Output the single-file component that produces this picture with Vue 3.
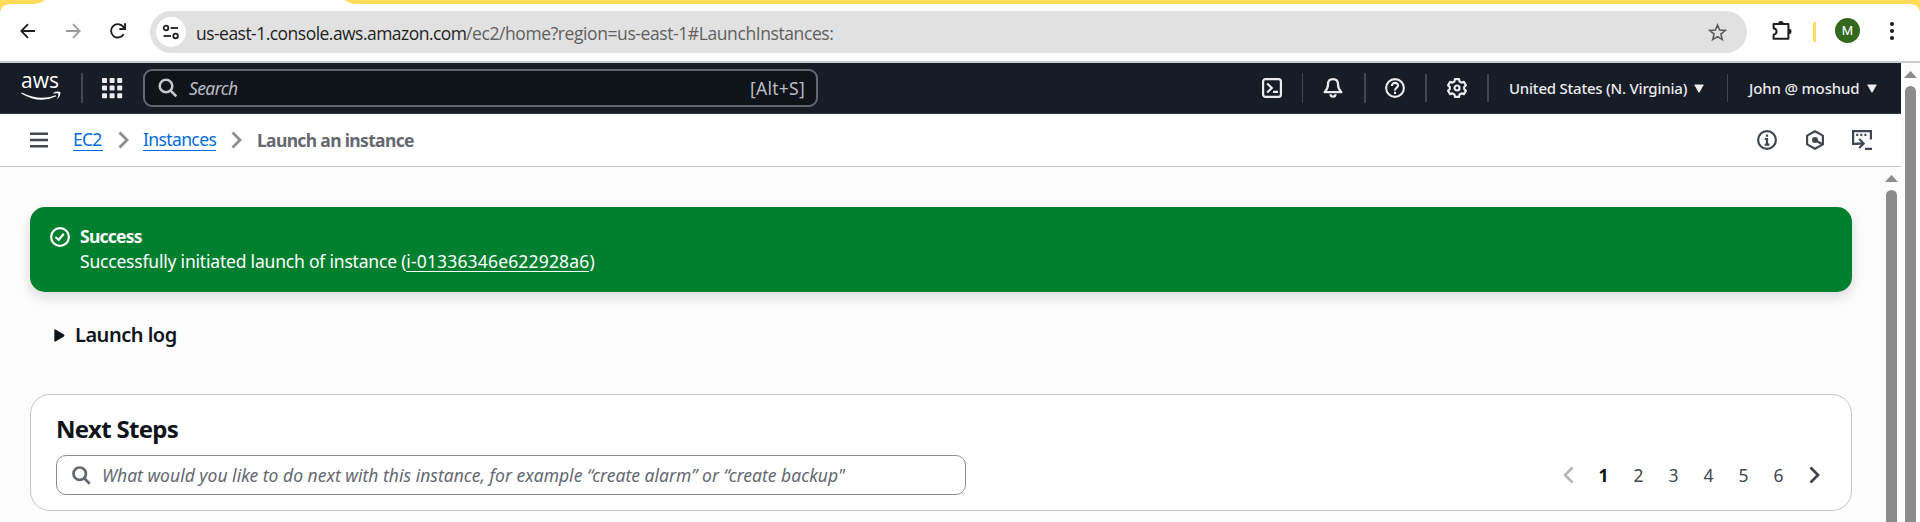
<script setup>
const pages = [1, 2, 3, 4, 5, 6]
const dots = [0, 1, 2, 3, 4, 5, 6, 7, 8].map((i) => ({ x: (i % 3) * 7.6, y: Math.floor(i / 3) * 7.6 }))
</script>

<template>
  <div class="window">
    <div class="strip">
      <svg width="1920" height="14" viewBox="0 0 1920 14">
        <path d="M0 0H45Q40 4 32 4H12Q0 4 0 14Z" fill="#ffdc5c" />
        <path d="M345 0H1920V14Q1920 4 1909 4H356Q350 4 345 0Z" fill="#ffdc5c" />
      </svg>
    </div>

    <div class="toolbar">
      <svg class="back" width="16" height="16" viewBox="0 0 16 16" fill="none" stroke="#1f1f1f" stroke-width="1.8">
        <path d="M15 8H2M8 1.2L1.3 8L8 14.8" />
      </svg>
      <svg class="fwd" width="16" height="16" viewBox="0 0 16 16" fill="none" stroke="#9c9c9c" stroke-width="1.8">
        <path d="M1 8H14M8 1.2L14.7 8L8 14.8" />
      </svg>
      <svg class="reload" width="18" height="18" viewBox="0 0 18 18" fill="none" stroke="#1f1f1f" stroke-width="1.9">
        <path d="M14.6 12.2A6.7 6.7 0 1 1 14.1 4.7L16 6.6" />
        <path d="M16 1.2V7H10.3" />
      </svg>
      <div class="address">
        <span class="site">
          <svg width="18" height="16" viewBox="0 0 18 16" fill="none" stroke="#1f1f1f" stroke-width="1.8">
            <circle cx="4" cy="4" r="2.3" /><path d="M8.6 4H16" />
            <circle cx="13.6" cy="12" r="2.3" /><path d="M1.6 12H9" />
          </svg>
        </span>
        <span class="host">us-east-1.console.aws.amazon.com</span>
        <span class="path">/ec2/home?region=us-east-1#LaunchInstances:</span>
        <svg class="star" width="19" height="19" viewBox="0 0 19 19" fill="none" stroke="#5b5b5b" stroke-width="1.6">
          <path d="M9.5 2L11.6 7.1L17.2 7.5L12.9 11.1L14.3 16.6L9.5 13.6L4.7 16.6L6.1 11.1L1.8 7.5L7.4 7.1Z" />
        </svg>
      </div>
      <svg class="puzzle" width="22" height="22" viewBox="0 0 22 22">
        <path d="M3.2 4H17.4V18.8H2.6V14.8Q5.6 14 5.6 11.6Q5.6 9 2.6 8.3V4Z" fill="none" stroke="#1f1f1f" stroke-width="2" stroke-linejoin="round" />
        <path d="M7.2 3.6A2.7 2.7 0 0 1 12.6 3.6ZM17.8 8.7A2.7 2.7 0 0 1 17.8 14.1Z" fill="#1f1f1f" />
      </svg>
      <span class="accent"></span>
      <span class="avatar">M</span>
      <svg class="kebab" width="6" height="20" viewBox="0 0 6 20" fill="#1f1f1f">
        <circle cx="3" cy="3" r="2.1" /><circle cx="3" cy="10" r="2.1" /><circle cx="3" cy="17" r="2.1" />
      </svg>
    </div>

    <div class="page">
      <div class="console">
        <header class="nav">
          <div class="aws">
            <span>aws</span>
            <svg width="40" height="11" viewBox="0 0 40 11" fill="#fff">
              <path d="M.6 1.5Q19 10.500 34.500 4.200L35.300 5.200Q18.500 13.500 .3 2.400Z" />
              <path d="M32 2Q36 -.1 39.200 1Q40 4.600 36.700 7.700L36.200 7.400Q38 4 37.200 2.500Q35.500 2 32.200 2.600Z" />
            </svg>
          </div>
          <i class="sep s1"></i>
          <svg class="grid" width="21" height="21" viewBox="0 0 21 21" fill="#ebebf0">
            <rect v-for="d in dots" :key="d.x + '-' + d.y" :x="d.x" :y="d.y" width="5" height="5" rx=".8" />
          </svg>
          <div class="navsearch">
            <svg width="20" height="20" viewBox="0 0 20 20" fill="none" stroke="#c6c6cd" stroke-width="2.5">
              <circle cx="8" cy="8" r="6.300" /><path d="M12.500 12.500L18.300 18.300" />
            </svg>
            <span class="term">Search</span>
            <span class="key">[Alt+S]</span>
          </div>
          <svg class="nicon shell" width="20" height="20" viewBox="0 0 20 20" fill="none" stroke="#ebebf0" stroke-width="2.200">
            <rect x="1.100" y="1.100" width="17.800" height="17.800" rx="2.400" />
            <path d="M5.200 5.500L9.800 10L5.200 14.500M11 13.800H16" />
          </svg>
          <i class="sep s2"></i>
          <svg class="nicon bell" width="20" height="20" viewBox="0 0 20 20" fill="none" stroke="#ebebf0" stroke-width="2.200" stroke-linejoin="round">
            <path d="M10 1.200C6.800 1.200 5 3.500 5 6.500C5 10 3.700 12 1.600 14.200H18.400C16.300 12 15 10 15 6.500C15 3.500 13.200 1.200 10 1.200Z" />
            <path d="M7.500 16.200A2.500 2.500 0 0 0 12.500 16.200" />
          </svg>
          <i class="sep s3"></i>
          <svg class="nicon help" width="20" height="20" viewBox="0 0 20 20" fill="none" stroke="#ebebf0" stroke-width="2.100">
            <circle cx="10" cy="10" r="8.900" />
            <path d="M6.900 8C6.900 5.900 8.200 4.900 10 4.900S13.100 6 13.100 7.600C13.100 9.800 10 9.600 10 12.400M10 13.800V16" />
          </svg>
          <i class="sep s4"></i>
          <svg class="nicon gear" width="20" height="20" viewBox="0 0 20 20" fill="none" stroke="#ebebf0" stroke-width="2.200" stroke-linejoin="round">
            <path d="M8 1.100H12L12.600 3.500L14.500 4.600L16.900 3.900L18.900 7.300L17.200 9V11L18.900 12.700L16.900 16.100L14.500 15.400L12.600 16.500L12 18.900H8L7.400 16.500L5.500 15.400L3.100 16.100L1.100 12.700L2.800 11V9L1.100 7.300L3.100 3.900L5.500 4.600L7.400 3.500Z" />
            <circle cx="10" cy="10" r="2.500" />
          </svg>
          <i class="sep s5"></i>
          <span class="region">United States (N. Virginia)</span>
          <svg class="caret" width="10" height="9" viewBox="0 0 10 9"><path d="M1 .5H9Q9.900.500 9.500 1.300L5.700 8Q5 9 4.300 8L.5 1.300Q.1.500 1 .5Z" fill="#ebebf0" /></svg>
          <i class="sep s6"></i>
          <span class="user">John @ moshud</span>
          <svg class="caret" width="10" height="9" viewBox="0 0 10 9"><path d="M1 .5H9Q9.900.500 9.500 1.300L5.700 8Q5 9 4.300 8L.5 1.300Q.1.500 1 .5Z" fill="#ebebf0" /></svg>
        </header>

        <div class="crumbs">
          <svg class="burger" width="18" height="16" viewBox="0 0 18 16" fill="#424650">
            <path d="M0 .5H18V2.900H0ZM0 6.800H18V9.200H0ZM0 13.100H18V15.500H0Z" />
          </svg>
          <a class="ec2">EC2</a>
          <svg class="chev c1" width="11" height="18" viewBox="0 0 11 18" fill="none" stroke="#8c8c94" stroke-width="2.800"><path d="M1.500 1.500L9 9L1.500 16.500" /></svg>
          <a class="inst">Instances</a>
          <svg class="chev c2" width="11" height="18" viewBox="0 0 11 18" fill="none" stroke="#8c8c94" stroke-width="2.800"><path d="M1.500 1.500L9 9L1.500 16.500" /></svg>
          <b class="current">Launch an instance</b>
          <div class="tools">
            <svg width="20" height="20" viewBox="0 0 20 20" fill="none" stroke="#424650" stroke-width="2.200">
              <circle cx="10" cy="10" r="8.900" /><path d="M10 4.600V6.800M7.800 9H10V14.500M7.700 14.600H12.400" />
            </svg>
            <svg width="20" height="20" viewBox="0 0 20 20" fill="none" stroke="#424650" stroke-width="2.200">
              <path d="M10 1.300L17.900 5.600V14.400L10 18.700L2.100 14.400V5.600Z" stroke-linejoin="round" />
              <circle cx="10" cy="10" r="3" fill="#424650" stroke="none" /><path d="M10 10L16.800 14" />
            </svg>
            <svg width="20" height="20" viewBox="0 0 20 20" fill="none" stroke="#424650" stroke-width="2.200">
              <path d="M6 13.900H1.100V1.100H18.900V9.500" />
              <path d="M4.200 4.900H6.200M8.300 4.900H10.300M12.400 4.900H14.400" />
              <path d="M4.500 13.700H11M7.200 9L11.600 13.500L7.200 18M13 18.900H20" />
            </svg>
          </div>
        </div>

        <main class="content">
          <section class="flash">
            <svg width="20" height="20" viewBox="0 0 20 20" fill="none" stroke="#fff" stroke-width="2.200">
              <circle cx="10" cy="10" r="8.900" /><path d="M5.500 10L8.700 13L13.800 6.700" />
            </svg>
            <div>
              <b class="ok">Success</b>
              <p><span class="msg">Successfully initiated launch of instance (</span><a>i-01336346e622928a6</a>)</p>
            </div>
          </section>

          <section class="log">
            <svg width="11" height="13" viewBox="0 0 11 13"><path d="M.3 1.200Q.3 0 1.500.400L10 5.500Q11 6.500 10 7.500L1.500 12.600Q.3 13 .3 11.800Z" fill="#0f141a" /></svg>
            <b>Launch log</b>
          </section>

          <section class="card">
            <h2>Next Steps</h2>
            <div class="row">
              <div class="ask">
                <svg width="19" height="19" viewBox="0 0 19 19" fill="none" stroke="#656871" stroke-width="2.700">
                  <circle cx="7.700" cy="7.700" r="6.200" /><path d="M12 12L17.700 17.700" />
                </svg>
                <span>What would you like to do next with this instance, for example “create alarm” or “create backup"</span>
              </div>
              <nav class="pager">
                <svg width="11" height="18" viewBox="0 0 11 18" fill="none" stroke="#b4b4bb" stroke-width="2.500"><path d="M9.500 1.500L2 9L9.500 16.500" /></svg>
                <span v-for="p in pages" :key="p" :class="{ on: p === 1 }">{{ p }}</span>
                <svg width="11" height="18" viewBox="0 0 11 18" fill="none" stroke="#424650" stroke-width="2.800"><path d="M1.500 1.500L9 9L1.500 16.500" /></svg>
              </nav>
            </div>
          </section>

          <div class="scroll inner">
            <svg width="13" height="7" viewBox="0 0 13 7"><path d="M6.500 0L13 7H0Z" fill="#8b8b8b" /></svg>
            <i></i>
          </div>
        </main>
      </div>

      <div class="scroll outer">
        <svg width="13" height="7" viewBox="0 0 13 7"><path d="M6.500 0L13 7H0Z" fill="#8b8b8b" /></svg>
        <i></i>
      </div>
    </div>
  </div>
</template>

<style>
html, body { margin: 0; overflow: hidden; }
</style>

<style scoped>
* { box-sizing: border-box; }
.window {
  width: 1920px; height: 522px; overflow: hidden; display: flex; flex-direction: column;
  background: #fff; color: #0f141a; font-family: "Noto Sans", "Open Sans", sans-serif; font-size: 17.5px;
}
svg { display: block; flex: none; }
span, b, a, h2, p { white-space: nowrap; }
.strip { height: 4px; flex: none; }

.toolbar { height: 59px; flex: none; display: flex; align-items: center; padding: 0 0 2px; border-bottom: 2px solid #c9cccd; }
.back { margin: 0 0 2px 20px; }
.fwd { margin: 0 0 2px 29px; }
.reload { margin: 0 0 2px 28px; }
.address {
  width: 1597px; height: 42px; margin: 0 0 0 23px; border-radius: 21px; background: #e1e1e1;
  display: flex; align-items: center; padding-left: 6px; font-family: "Open Sans", sans-serif;
}
.site { width: 30px; height: 30px; border-radius: 50%; background: #fff; display: flex; align-items: center; justify-content: center; margin-right: 10px; }
.host, .path { line-height: 24px; height: 24px; flex: none; font-size: 17.5px; margin-top: 2px; }
.host { width: 270px; color: #1f1f1f; letter-spacing: -.53px; }
.path { width: 1242px; color: #606060; letter-spacing: -.41px; }
.star { margin-top: 1px; }
.puzzle { margin: 0 0 2px 24px; }
.accent { width: 3px; height: 20px; border-radius: 1px; background: #ffdc5c; margin: 0 0 0 20px; }
.avatar {
  width: 25px; height: 25px; border-radius: 50%; background: #33691e; color: #fff; margin: 0 0 2px 19px;
  font: 13px/25px Roboto, sans-serif; text-align: center;
}
.kebab { margin: 0 0 1px 29px; }

.page { flex: 1; min-height: 0; display: flex; }
.console { width: 1901px; display: flex; flex-direction: column; }
.nav { height: 51px; flex: none; display: flex; align-items: center; background: #161d26; border-bottom: 1px solid #353a45; padding-left: 21px; }
.aws { width: 40px; color: #fff; height: 30px; margin-top: -2px; }
.aws span { display: block; height: 19px; font: 500 21px/16px "Open Sans", sans-serif; padding-left: 0; letter-spacing: 0; }
.sep { background: #424650; height: 30px; width: 2px; flex: none; }
.s1 { margin-left: 20px; }
.grid { margin-left: 19px; }
.navsearch {
  width: 675px; height: 38px; margin-left: 20px; border: 2px solid #656871; border-radius: 9px; background: #0f141a;
  display: flex; align-items: center; padding-left: 14px; color: #b9bcc4;
}
.navsearch svg { margin-left: -1px; }
.navsearch span { margin-bottom: 1px; }
.term { width: 562px; margin-left: 11px; font-style: italic; letter-spacing: -.6px; }
.key { margin-left: -1px; letter-spacing: .25px; }
.nicon.shell { margin-left: 444px; }
.s2 { width: 1px; margin-left: 20px; }
.bell { margin-left: 20px; }
.s3 { margin-left: 21px; }
.help { margin-left: 19px; }
.s4 { margin-left: 20px; height: 28px; }
.gear { margin-left: 20px; }
.s5 { margin-left: 20px; height: 28px; }
.region, .user { color: #ebebf0; font-size: 15px; font-weight: 500; line-height: 20px; flex: none; }
.region { margin-left: 20px; width: 185px; letter-spacing: -.22px; }
.s6 { margin-left: 23px; width: 1px; height: 28px; }
.user { margin-left: 21px; width: 118px; letter-spacing: -.15px; }

.crumbs { height: 53px; flex: none; display: flex; align-items: center; border-bottom: 1px solid #c6c6cd; background: #fff; padding-left: 30px; }
.ec2, .inst { color: #006ce0; line-height: 21px; height: 22px; border-bottom: 1px solid #006ce0; }
.ec2 { width: 30px; margin-left: 25px; letter-spacing: -.8px; }
.c1 { margin-left: 15px; }
.inst { width: 73px; margin-left: 14px; letter-spacing: -.62px; }
.c2 { margin-left: 15px; }
.current { margin-left: 15px; width: 156px; color: #656871; letter-spacing: -.66px; }
.tools { margin-left: auto; padding-right: 29px; display: flex; gap: 27.5px; }

.content { flex: 1; min-height: 0; position: relative; background: #fcfcfd; padding: 40px 0 0 30px; }
.flash {
  width: 1822px; height: 85px; border-radius: 15px; background: #00802f; color: #fff;
  display: flex; padding: 20px; gap: 10px; box-shadow: 0 5px 12px 1px rgba(0, 7, 22, .12);
}
.ok { display: block; line-height: 20px; letter-spacing: -.75px; margin-top: -1px; }
.flash p { margin: 4px 0 0; line-height: 22px; letter-spacing: -.2px; }
.flash a { display: inline-block; height: 22px; border-bottom: 1px solid #fff; letter-spacing: .17px; }
.log { display: flex; align-items: center; height: 30px; margin: 28px 0 0 24px; font-size: 20px; }
.log b { margin: 0 0 2px 10px; letter-spacing: -.5px; font-weight: 600; }
.card {
  width: 1822px; height: 117px; margin-top: 44px; padding: 19px 25px 0; border: 1px solid #c6c6cd; border-radius: 20px; background: #fff;
}
h2 { margin: 0 0 11px; font-size: 24px; line-height: 30px; letter-spacing: -.7px; }
.row { display: flex; align-items: center; justify-content: space-between; }
.ask {
  width: 910px; height: 40px; border: 1px solid #8c8c94; border-radius: 10px; display: flex; align-items: center;
  padding-left: 15px; gap: 11px; color: #656871; font-style: italic; letter-spacing: .01px;
}
.ask span { margin-bottom: 1px; }
.pager { display: flex; align-items: center; color: #424650; margin-right: 6px; }
.pager span { width: 35px; text-align: center; margin-bottom: 1px; }
.pager svg:first-child { margin-right: 12px; }
.pager svg:last-child { margin-left: 13px; }
.on { font-weight: 700; color: #0f141a; }

.scroll { display: flex; flex-direction: column; align-items: center; background: #fcfcfc; width: 19px; padding-top: 8px; }
.scroll i { width: 11px; flex: 1; background: #8b8b8b; border-radius: 6px 6px 0 0; margin-top: 8px; }
.inner { position: absolute; right: 0; top: 0; bottom: 0; }
</style>
